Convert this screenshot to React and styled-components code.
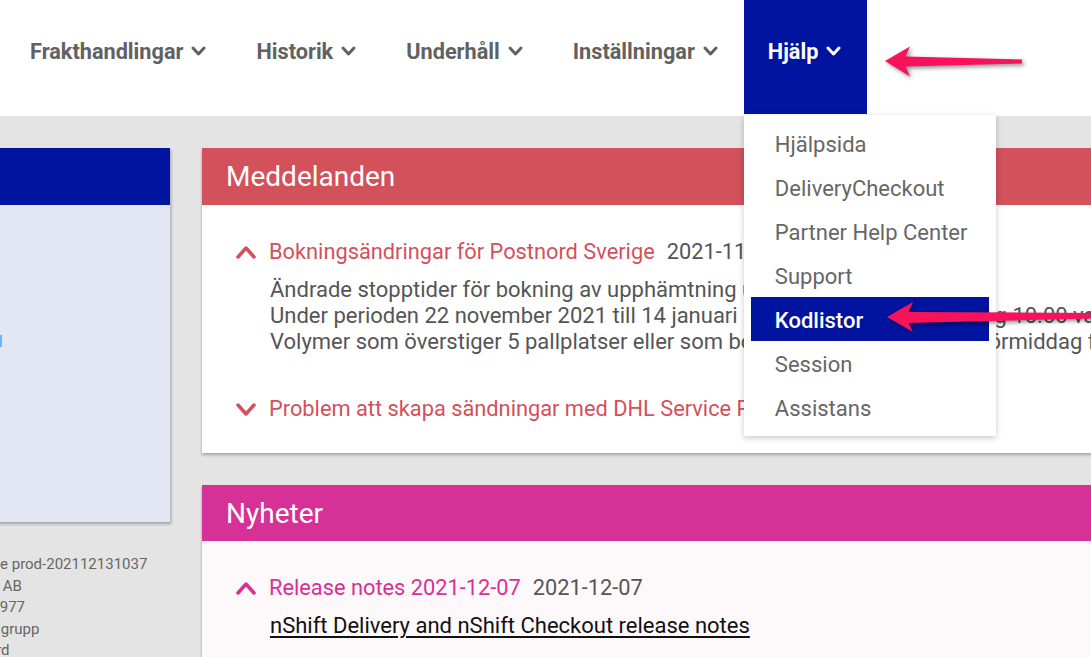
import React from "react";
import styled, { createGlobalStyle } from "styled-components";

const GlobalStyle = createGlobalStyle`
  html, body {
    margin: 0;
    padding: 0;
  }
  body {
    background: #e4e4e4;
    font-family: Roboto, "Noto Sans", Arial, sans-serif;
    overflow: hidden;
  }
`;

const Page = styled.div`
  position: relative;
  width: 1091px;
  height: 657px;
  overflow: hidden;
`;

const Header = styled.header`
  height: 116px;
  background: #ffffff;
  display: flex;
  align-items: flex-start;
  padding-left: 6px;
`;

const NavItem = styled.div`
  position: relative;
  height: 114px;
  box-sizing: border-box;
  display: flex;
  align-items: center;
  gap: 8px;
  padding: 0 26px 12px 24px;
  font-size: 21.7px;
  font-weight: 700;
  white-space: nowrap;
  color: ${(p) => (p.$active ? "#ffffff" : "#616161")};
  background: ${(p) => (p.$active ? "#0014a0" : "transparent")};
`;

const Dropdown = styled.div`
  position: absolute;
  top: calc(100% + 1px);
  left: 0;
  width: 252px;
  box-sizing: border-box;
  padding: 6px 7px 7px;
  background: #ffffff;
  box-shadow: 0 2px 6px rgba(0, 0, 0, 0.22);
  z-index: 10;
`;

const MenuItem = styled.div`
  height: 44px;
  box-sizing: border-box;
  display: flex;
  align-items: center;
  padding: 2px 0 0 24px;
  font-size: 22px;
  font-weight: ${(p) => (p.$active ? 500 : 400)};
  color: ${(p) => (p.$active ? "#ffffff" : "#666666")};
  background: ${(p) => (p.$active ? "#0014a0" : "transparent")};
`;

const Content = styled.div`
  display: flex;
  gap: 32px;
  padding-top: 32px;
`;

const Side = styled.aside`
  flex: 0 0 262px;
  margin-left: -92px;
`;

const SidePanel = styled.div`
  height: 374px;
  background: #e3e7f3;
  box-shadow: 1px 2px 3px rgba(0, 0, 0, 0.3);
  overflow: hidden;
`;

const SidePanelHead = styled.div`
  height: 57px;
  background: #0014a0;
`;

const SideMarker = styled.div`
  width: 2px;
  height: 12px;
  margin: 130px 0 0 92px;
  background: #6cb4f4;
`;

const SideInfo = styled.div`
  margin-top: 32px;
  font-size: 15px;
  line-height: 21.5px;
  color: #666666;
  white-space: nowrap;
`;

const Main = styled.main`
  flex: 0 0 960px;
  display: flex;
  flex-direction: column;
  gap: 32px;
`;

const Card = styled.section`
  background: ${(p) => p.$bg};
  box-shadow: 0 2px 3px rgba(0, 0, 0, 0.28);
`;

const CardHead = styled.h2`
  margin: 0;
  height: ${(p) => p.$h}px;
  display: flex;
  align-items: center;
  padding: 0 24px;
  background: ${(p) => p.$color};
  color: #ffffff;
  font-size: 28px;
  font-weight: 400;
`;

const CardBody = styled.div`
  padding: 34px 24px 31px 34px;
`;

const Entry = styled.div`
  & + & {
    margin-top: 41px;
  }
`;

const EntryHead = styled.div`
  display: flex;
  align-items: center;
  font-size: 21.8px;
  line-height: 26px;
  white-space: nowrap;
`;

const EntryTitle = styled.span`
  margin-left: 13px;
  color: ${(p) => p.$color};
`;

const EntryDate = styled.span`
  margin-left: 12px;
  color: #555555;
`;

const EntryText = styled.div`
  margin-top: 12px;
  padding-left: 34px;
  font-size: 22px;
  line-height: 26px;
  color: #555555;
  white-space: nowrap;
`;

const EntryLink = styled.a`
  color: #111111;
  text-decoration: underline;
  text-underline-offset: 3px;
`;

const Annotations = styled.svg`
  position: absolute;
  top: 0;
  left: 0;
  width: 1091px;
  height: 657px;
  pointer-events: none;
  z-index: 20;
  filter: drop-shadow(2px 2px 2px rgba(0, 0, 0, 0.45));
`;

const Chevron = ({ up, color, w = 15, h = 10, sw = 3 }) => (
  <svg width={w} height={h} viewBox={`0 0 ${w} ${h}`} style={{ flex: "none" }}>
    <polyline
      points={
        up
          ? `2,${h - 2} ${w / 2},2 ${w - 2},${h - 2}`
          : `2,2 ${w / 2},${h - 2} ${w - 2},2`
      }
      fill="none"
      stroke={color}
      strokeWidth={sw}
      strokeLinecap="round"
      strokeLinejoin="round"
    />
  </svg>
);

const navItems = ["Frakthandlingar", "Historik", "Underhåll", "Inställningar"];

const helpItems = [
  "Hjälpsida",
  "DeliveryCheckout",
  "Partner Help Center",
  "Support",
  "Kodlistor",
  "Session",
  "Assistans",
];

export default function App() {
  return (
    <Page>
      <GlobalStyle />
      <Header>
        {navItems.map((item) => (
          <NavItem key={item}>
            {item}
            <Chevron color="#616161" />
          </NavItem>
        ))}
        <NavItem $active>
          Hjälp
          <Chevron color="#ffffff" />
          <Dropdown>
            {helpItems.map((item) => (
              <MenuItem key={item} $active={item === "Kodlistor"}>
                {item}
              </MenuItem>
            ))}
          </Dropdown>
        </NavItem>
      </Header>

      <Content>
        <Side>
          <SidePanel>
            <SidePanelHead />
            <SideMarker />
          </SidePanel>
          <SideInfo>
            <div>Version: Online prod-202112131037</div>
            <div>Företag: Tuna AB</div>
            <div>Kundnr.: 1234977</div>
            <div>Roll: Standardgrupp</div>
            <div>Avtal: Postnord</div>
          </SideInfo>
        </Side>

        <Main>
          <Card $bg="#ffffff">
            <CardHead $color="#d2515b" $h={57}>
              Meddelanden
            </CardHead>
            <CardBody>
              <Entry>
                <EntryHead>
                  <Chevron up color="#d2515b" w={20} h={13} sw={3.5} />
                  <EntryTitle $color="#d2515b">
                    Bokningsändringar för Postnord Sverige
                  </EntryTitle>
                  <EntryDate>2021-11-19</EntryDate>
                </EntryHead>
                <EntryText>
                  <div>Ändrade stopptider för bokning av upphämtning under julhelgen.</div>
                  <div>
                    Under perioden 22 november 2021 till 14 januari 2022 gäller stopptid fredag
                    10.00 vardagen innan.
                  </div>
                  <div>
                    Volymer som överstiger 5 pallplatser eller som bokas ska bokas senaste
                    förmiddag före.
                  </div>
                </EntryText>
              </Entry>
              <Entry>
                <EntryHead>
                  <Chevron color="#d2515b" w={20} h={13} sw={3.5} />
                  <EntryTitle $color="#d2515b">
                    Problem att skapa sändningar med DHL Service Point
                  </EntryTitle>
                  <EntryDate>2021-11-10</EntryDate>
                </EntryHead>
              </Entry>
            </CardBody>
          </Card>

          <Card $bg="#fdf9fa">
            <CardHead $color="#d63196" $h={56}>
              Nyheter
            </CardHead>
            <CardBody>
              <Entry>
                <EntryHead>
                  <Chevron up color="#d63196" w={20} h={13} sw={3.5} />
                  <EntryTitle $color="#d63196">Release notes 2021-12-07</EntryTitle>
                  <EntryDate>2021-12-07</EntryDate>
                </EntryHead>
                <EntryText>
                  <EntryLink href="#">nShift Delivery and nShift Checkout release notes</EntryLink>
                </EntryText>
              </Entry>
            </CardBody>
          </Card>
        </Main>
      </Content>

      <Annotations viewBox="0 0 1091 657">
        <polygon
          points="885,61 910,46.5 905.5,56.5 1022,59.5 1022,63.5 905.5,66.5 910,76.5"
          fill="#f8125b"
        />
        <polygon
          points="887,317 913,302 908.5,312 1095,313 1095,318.5 908.5,323 913,332"
          fill="#f8125b"
        />
      </Annotations>
    </Page>
  );
}
